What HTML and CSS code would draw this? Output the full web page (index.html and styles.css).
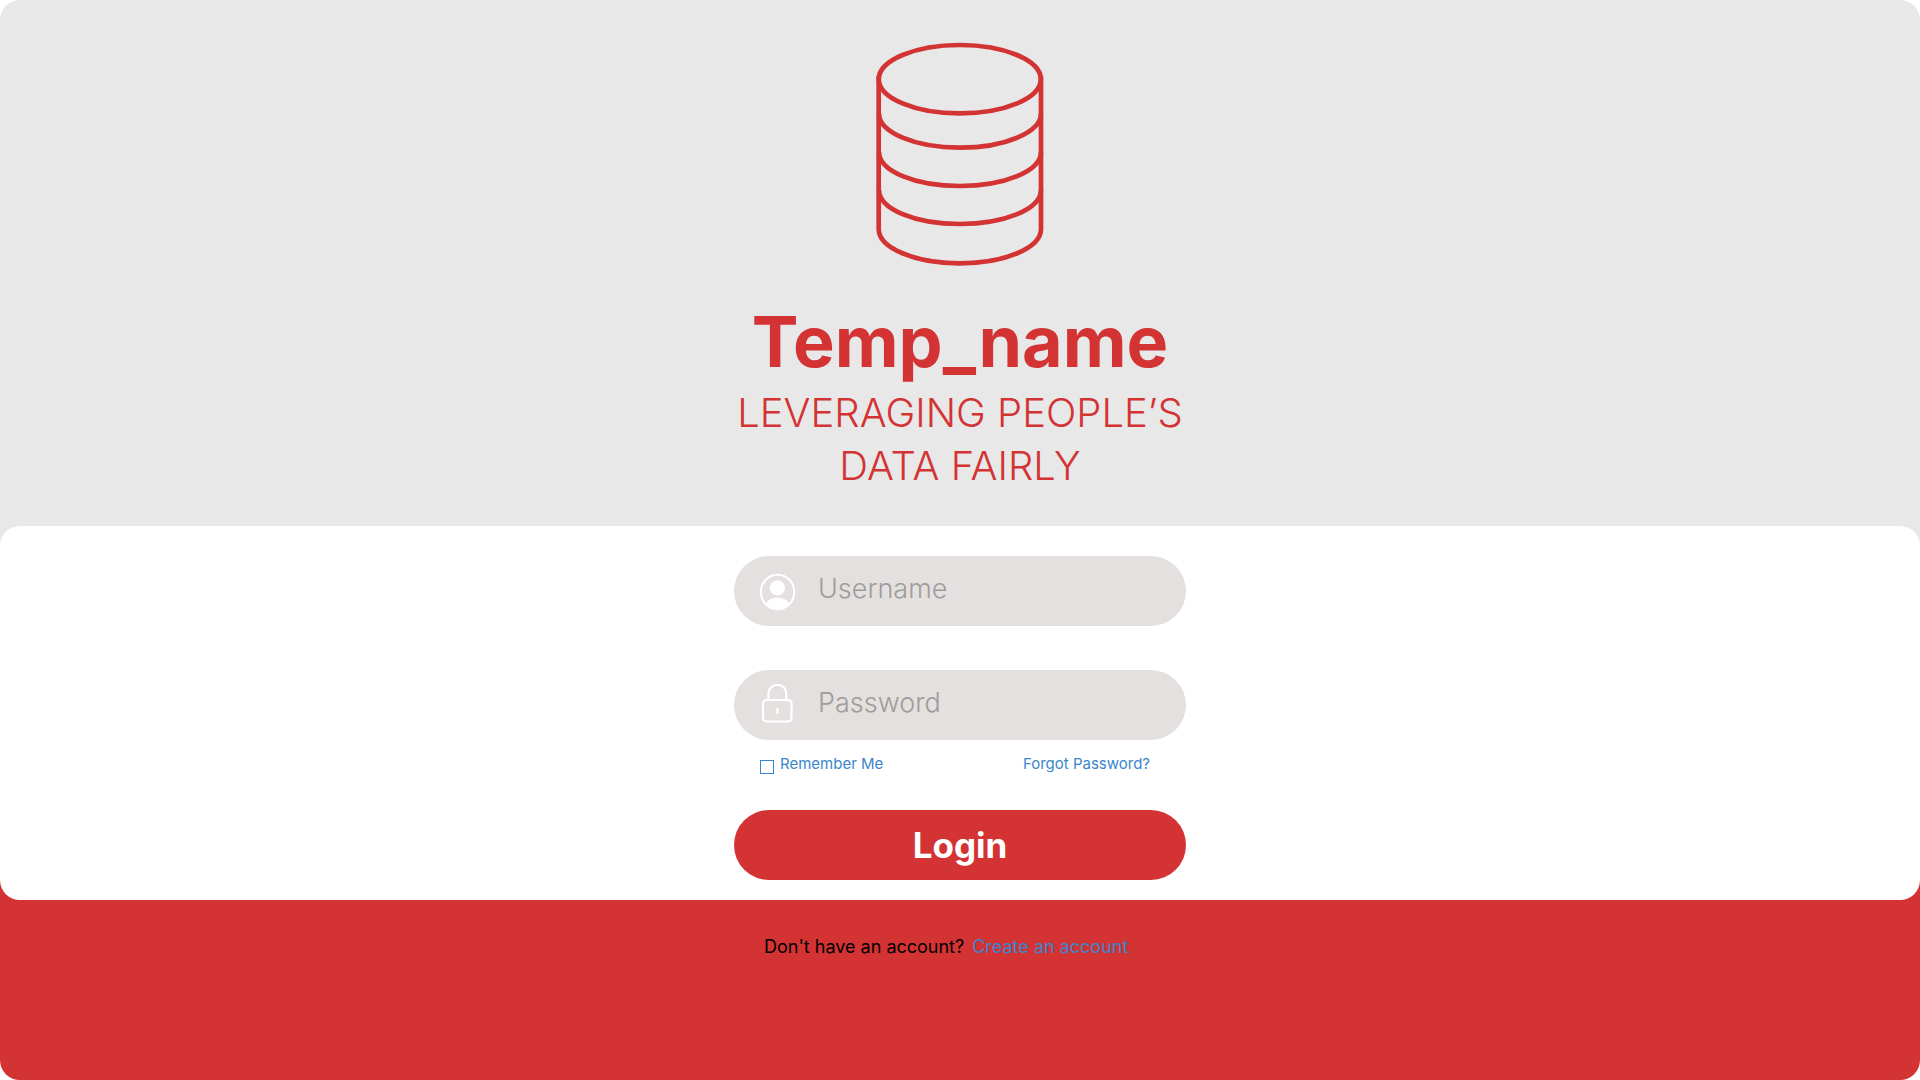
FILE: index.html
```html
<!DOCTYPE html>
<html lang="en">
<head>
<meta charset="utf-8">
<meta name="viewport" content="width=device-width, initial-scale=1">
<title>Temp_name – Login</title>
<link rel="stylesheet" href="styles.css">
</head>
<body>
<div class="page">
  <header class="hero">
    <svg class="logo" viewBox="0 0 168 224" fill="none" stroke="currentColor" stroke-width="4.700" aria-hidden="true">
      <ellipse cx="83.800" cy="37.200" rx="81" ry="34.200"/>
      <path d="M2.700 34V187C2.700 206 39 221.300 83.800 221.300S165 206 165 187V34"/>
      <path d="M3 71.500C3 90.400 39 105.700 83.800 105.700S165 90.400 165 71.500"/>
      <path d="M3 110C3 129 39 144 83.800 144S165 129 165 110"/>
      <path d="M3 148C3 167 39 182 83.800 182S165 167 165 148"/>
    </svg>
    <h1 class="title">Temp_name</h1>
    <p class="tagline">LEVERAGING PEOPLE’S<br>DATA FAIRLY</p>
  </header>

  <main class="band">
    <form class="card">
      <div class="form">
        <label class="field">
          <svg class="icon" viewBox="0 0 36 40" aria-hidden="true">
            <ellipse cx="17.500" cy="21" rx="16.700" ry="17.300" fill="none" stroke="currentColor" stroke-width="2"/>
            <circle cx="17.500" cy="16.800" r="7.600" fill="currentColor"/>
            <path d="M6 32.500C8.300 28.300 12.500 26.700 17.500 26.700S26.700 28.300 29 32.500C26 36.500 22 38.300 17.500 38.300S9 36.500 6 32.500Z" fill="currentColor"/>
          </svg>
          <input class="input" type="text" name="username" placeholder="Username" aria-label="Username">
        </label>
        <label class="field">
          <svg class="icon" viewBox="0 0 36 40" fill="none" stroke="currentColor" stroke-width="2.200" aria-hidden="true">
            <rect x="3" y="15" width="28.500" height="21.500" rx="3.500"/>
            <path d="M8.500 15V8.500C8.500 3.500 12.500 -0.200 17.500 -0.200S26.200 3.500 26.200 8.500V15"/>
            <path d="M17.500 23.500V28" stroke-linecap="round"/>
          </svg>
          <input class="input" type="password" name="password" placeholder="Password" aria-label="Password">
        </label>
        <div class="options">
          <label class="remember"><input class="checkbox" type="checkbox" name="remember">Remember Me</label>
          <a class="link" href="#forgot">Forgot Password?</a>
        </div>
        <button class="login" type="submit">Login</button>
      </div>
    </form>
  </main>

  <footer class="footer">
    <p class="signup">Don't have an account? <a class="link" href="#create">Create an account</a></p>
  </footer>
</div>
</body>
</html>
```
FILE: styles.css
```css
:root {
  --red: #d33333;
  --gray: #e8e8e8;
  --blue: #3a86cc;
}

* {
  box-sizing: border-box;
}

body {
  margin: 0;
  background: #fff;
  font-family: Inter, "Open Sans", sans-serif;
}

.page {
  display: flex;
  flex-direction: column;
  min-height: 100vh;
  border-radius: 20px;
  overflow: hidden;
}

.hero {
  display: flex;
  flex-direction: column;
  align-items: center;
  padding: 42px 16px 34px;
  background: var(--gray);
  color: var(--red);
  text-align: center;
}

.logo {
  width: 168px;
  height: 224px;
}

.title {
  margin: 36px 0 0;
  font-size: 70px;
  line-height: 80px;
  font-weight: 700;
}

.tagline {
  margin: 4px 0 0;
  font-size: 40px;
  line-height: 53px;
  font-weight: 300;
}

.band {
  background: linear-gradient(var(--gray) 50%, var(--red) 50%);
}

.card {
  padding: 30px 16px 20px;
  background: #fff;
  border-radius: 20px;
}

.form {
  display: flex;
  flex-direction: column;
  max-width: 452px;
  margin: 0 auto;
}

.field {
  display: flex;
  align-items: center;
  gap: 22px;
  height: 70px;
  padding: 0 26px;
  background: #e4e0df;
  border-radius: 35px;
}

.field + .field {
  margin-top: 44px;
}

.icon {
  flex: none;
  width: 36px;
  height: 40px;
  color: #fff;
  overflow: visible;
}

.input {
  flex: 1;
  min-width: 0;
  padding: 0 0 4px;
  border: 0;
  outline: 0;
  background: none;
  color: #555;
  font: 300 27px/32px Inter, "Open Sans", sans-serif;
}

.input::placeholder {
  color: #a09c9b;
  opacity: 1;
}

.options {
  display: flex;
  justify-content: space-between;
  height: 70px;
  padding: 14px 36px 0 26px;
  color: var(--blue);
  font-size: 15px;
  line-height: 20px;
}

.remember {
  display: flex;
  gap: 6px;
}

.checkbox {
  appearance: none;
  width: 14px;
  height: 14px;
  margin: 6px 0 0;
  border: 1px solid var(--blue);
}

.checkbox:checked {
  background: var(--blue);
}

.link {
  color: var(--blue);
  text-decoration: none;
}

.login {
  height: 70px;
  padding: 0;
  border: 0;
  border-radius: 35px;
  background: var(--red);
  color: #fff;
  font: 700 35px/40px Inter, "Open Sans", sans-serif;
  cursor: pointer;
}

.footer {
  flex: 1;
  padding: 36px 16px;
  background: var(--red);
}

.signup {
  display: flex;
  flex-wrap: wrap;
  gap: 8px;
  max-width: 452px;
  margin: 0 auto;
  padding-left: 30px;
  color: #000;
  font-size: 18px;
  line-height: 22px;
}
```
